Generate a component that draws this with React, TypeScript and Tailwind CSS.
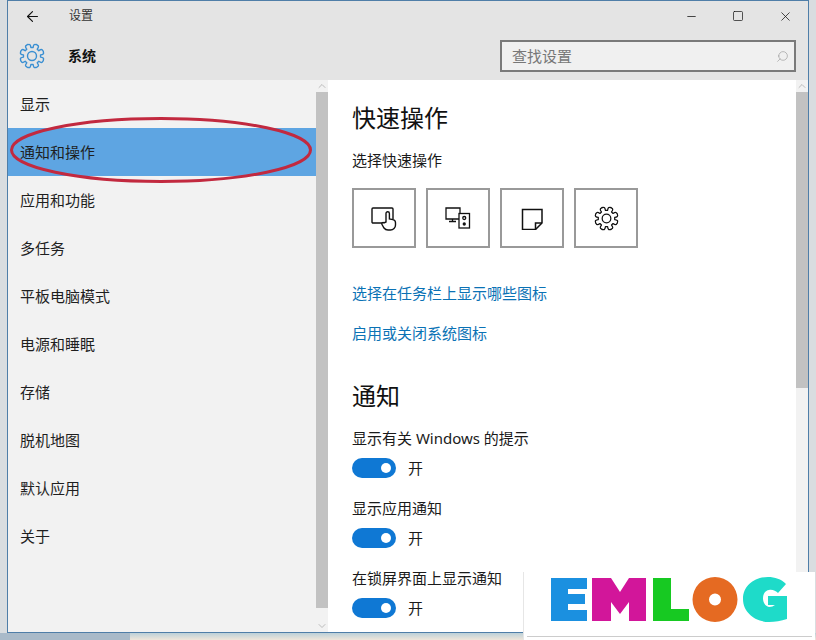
import React from 'react';
import { ArrowLeft, ChevronDown, ChevronUp, Minus, Search, Square, X } from 'lucide-react';

const navItems = ['显示', '通知和操作', '应用和功能', '多任务', '平板电脑模式', '电源和睡眠', '存储', '脱机地图', '默认应用', '关于'];

const toggles = ['显示有关 Windows 的提示', '显示应用通知', '在锁屏界面上显示通知'];

// eight rounded teeth, same shape for the header gear and the quick action one
function gearPath() {
  const pt = (r: number, deg: number) => {
    const a = (deg * Math.PI) / 180;
    return `${(13 + r * Math.cos(a)).toFixed(2)} ${(13 + r * Math.sin(a)).toFixed(2)}`;
  };
  let d = '';
  for (let i = 0; i < 8; i++) {
    const c = i * 45 - 22.5;
    d += `${i === 0 ? 'M' : 'L'}${pt(8.6, c - 15)} `;
    d += `Q${pt(12.6, c - 15)} ${pt(12, c - 4)} `;
    d += `Q${pt(12.6, c)} ${pt(12, c + 4)} `;
    d += `Q${pt(12.6, c + 15)} ${pt(8.6, c + 15)} `;
  }
  return d + 'Z';
}

function Gear({ size, color, width }: { size: number; color: string; width: number }) {
  return (
    <svg width={size} height={size} viewBox="0 0 26 26" fill="none" stroke={color} strokeWidth={width} strokeLinejoin="round">
      <path d={gearPath()} />
      <circle cx="13" cy="13" r="4.5" />
    </svg>
  );
}

function Toggle({ label }: { label: string }) {
  return (
    <div className="h-[70px]">
      <p className="h-[26px] text-[15px] leading-[26px] text-[#1a1a1a]">{label}</p>
      <div className="mt-[7px] flex items-center gap-3">
        <div className="flex h-5 w-11 items-center justify-end rounded-full bg-[#0f78d4] pr-[5px]">
          <div className="h-[10px] w-[10px] rounded-full bg-white" />
        </div>
        <span className="text-[15px] leading-5 text-[#1a1a1a]">开</span>
      </div>
    </div>
  );
}

function Scrollbar({ thumb, bg }: { thumb: string; bg: string }) {
  return (
    <div className={`flex w-3 shrink-0 flex-col ${bg}`}>
      <div className="flex h-3 items-center justify-center">
        <ChevronUp className="h-3 w-3 text-[#a8a8a8]" strokeWidth={1.5} />
      </div>
      <div className={`${thumb} bg-[#c2c2c2]`} />
      <div className="flex-1" />
      <div className="flex h-3 items-center justify-center">
        <ChevronDown className="h-3 w-3 text-[#a8a8a8]" strokeWidth={1.5} />
      </div>
    </div>
  );
}

function QuickButton({ children }: { children: React.ReactNode }) {
  return (
    <div className="flex h-[60px] w-[64px] items-center justify-center border-2 border-[#999999] bg-white">
      {children}
    </div>
  );
}

function TabletIcon() {
  return (
    <svg width="30" height="30" viewBox="0 0 30 30" fill="none" stroke="#111" strokeWidth="1.4">
      <path d="M14 20H4a1 1 0 0 1-1-1V6a1 1 0 0 1 1-1h19a1 1 0 0 1 1 1v10" />
      <path d="M17 19V10.500a1.700 1.700 0 0 1 3.400 0V16l3.500.6c1.600.3 2.600 1.600 2.600 3.200V22a5 5 0 0 1-5 5h-2.500a5 5 0 0 1-4-2L13 21.500c-.8-1.200.8-2.600 2-1.500z" fill="#fff" />
    </svg>
  );
}

function ProjectIcon() {
  return (
    <svg width="28" height="28" viewBox="0 0 28 28" fill="none" stroke="#111" strokeWidth="1.3">
      <path d="M15 15H2V4h14v5" />
      <path d="M8.500 15v2.500M5 17.500h7" />
      <rect x="15" y="9.500" width="10.500" height="14.500" />
      <circle cx="20.250" cy="14" r="1.500" />
      <circle cx="20.250" cy="20" r="1" fill="#111" />
    </svg>
  );
}

function NoteIcon() {
  return (
    <svg width="24" height="24" viewBox="0 0 24 24" fill="none" stroke="#111" strokeWidth="1.5">
      <path d="M2.500 3.500H22V17l-6.500 6.500H2.500z" />
      <path d="M22 17h-6.500v6.500" />
    </svg>
  );
}

export default function App() {
  return (
    <div className="relative h-[640px] w-[816px] overflow-hidden bg-[#d9dde0] pl-[7px] font-['Noto_Sans','Noto_Sans_CJK_SC','Liberation_Sans',sans-serif]">
      <div className="flex h-[633px] w-[802px] flex-col border border-[#4f7ea8]">
        <header className="h-[79px] shrink-0 bg-[#e4e4e4]">
          <div className="flex h-[30px] items-center">
            <ArrowLeft className="ml-[16px] h-[17px] w-[17px] text-[#111]" strokeWidth={1.6} />
            <span className="ml-[28px] text-xs text-[#333]">设置</span>
            <div className="ml-auto flex items-center gap-[34px] pr-[15px]">
              <Minus className="h-[13px] w-[13px] text-[#111]" strokeWidth={1.4} />
              <Square className="h-[12px] w-[12px] text-[#111]" strokeWidth={1.4} absoluteStrokeWidth />
              <X className="h-[15px] w-[15px] text-[#111]" strokeWidth={1.2} />
            </div>
          </div>
          <div className="flex h-[50px] items-center">
            <div className="ml-[11px]">
              <Gear size={26} color="#3a8fd2" width={1.4} />
            </div>
            <span className="ml-[23px] text-sm font-bold leading-5 text-[#111]">系统</span>
            <div className="ml-auto mr-3 flex h-8 w-[296px] items-center justify-between border-2 border-[#7a7a7a] bg-[#f0f0f0] pl-[10px] pr-[5px]">
              <span className="text-[15px] text-[#777]">查找设置</span>
              <Search className="h-[13px] w-[13px] -scale-x-100 text-[#999]" strokeWidth={1.2} />
            </div>
          </div>
        </header>

        <div className="flex min-h-0 flex-1">
          <aside className="flex w-[320px] shrink-0">
            <nav className="w-[308px] bg-[#f2f2f2]">
              {navItems.map((item, i) => (
                <div
                  key={item}
                  className={`relative flex h-12 items-center pl-3 text-[15px] text-[#1f1f1f] ${i === 1 ? 'bg-[#5ea5e2]' : ''}`}
                >
                  {item}
                  {i === 1 && (
                    <svg className="absolute left-[2px] top-[-11px]" width="302" height="66" viewBox="0 0 302 66" fill="none">
                      <ellipse cx="151" cy="33" rx="149.500" ry="31.500" stroke="#c2293f" strokeWidth="3" />
                    </svg>
                  )}
                </div>
              ))}
            </nav>
            <Scrollbar thumb="h-[516px]" bg="bg-[#f2f2f2]" />
          </aside>

          <main className="flex min-w-0 flex-1">
            <div className="w-[468px] overflow-hidden bg-white pl-6">
              <h2 className="mt-5 text-2xl leading-9 text-[#111]">快速操作</h2>
              <p className="mt-3 text-[15px] leading-6 text-[#1a1a1a]">选择快速操作</p>
              <div className="mt-4 flex gap-[10px]">
                <QuickButton><TabletIcon /></QuickButton>
                <QuickButton><ProjectIcon /></QuickButton>
                <QuickButton><NoteIcon /></QuickButton>
                <QuickButton><Gear size={25} color="#111" width={1.3} /></QuickButton>
              </div>
              <a className="mt-[33px] block text-[15px] leading-6 text-[#0a72b5]">选择在任务栏上显示哪些图标</a>
              <a className="mt-4 block text-[15px] leading-6 text-[#0a72b5]">启用或关闭系统图标</a>
              <h2 className="mt-[33px] text-2xl leading-9 text-[#111]">通知</h2>
              <div className="mt-[11px]">
                {toggles.map((t) => <Toggle key={t} label={t} />)}
              </div>
            </div>
            <Scrollbar thumb="h-[296px]" bg="bg-[#f2f2f2]" />
          </main>
        </div>
      </div>

      <div className="-ml-[7px] flex h-[7px] w-[816px]">
        <div className="w-[130px] bg-[#a9bac9]" />
        <div className="flex-1 bg-linear-to-b from-[#bcd0d8] to-[#efe6da]" />
      </div>

      <div className="absolute left-[523px] top-[572px] h-[68px] w-[292px] border-l border-[#e6e6e6] bg-white">
        <svg width="292" height="64" viewBox="0 0 292 64">
          <path d="M27 6h36v11H44v5h17v10H44v6h19v11H27z" fill="#1b90e0" />
          <path d="M68 6h19l9 14 9-14h17v43h-17V30l-9 12-9-12v19H68z" fill="#d2169a" />
          <path d="M129 6h18v31h18v12h-36z" fill="#17c922" />
          <path fillRule="evenodd" d="M191 5a22.500 22.500 0 1 1 0 45 22.500 22.500 0 0 1 0-45zm0 16.500a6 6 0 1 0 0 12 6 6 0 0 0 0-12z" fill="#e56a22" />
          <path d="M262 12l-8 9c-2-2-6-4-9-3-8 1-8 15 0 17 3 0 4-1 6-2h-7V24h19v23c-6 2-12 3-18 3-13 0-26-9-26-23 0-14 12-22 25-22 7 0 13 2 18 7z" fill="#1edbc9" />
        </svg>
        <div className="mx-[3px] h-px bg-[#cccccc]" />
      </div>
    </div>
  );
}
